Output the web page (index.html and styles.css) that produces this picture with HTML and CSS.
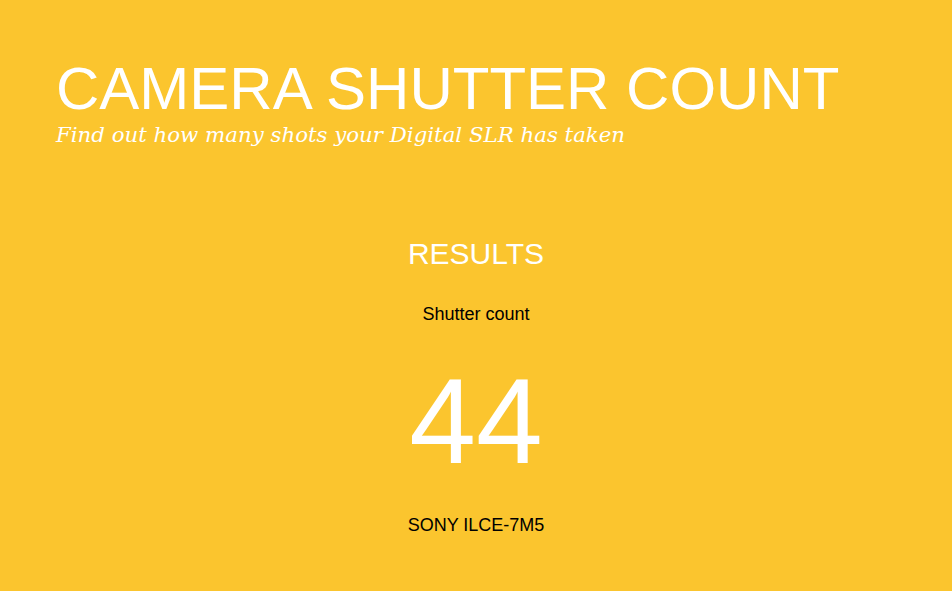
FILE: index.html
```html
<!DOCTYPE html>
<html lang="en">
<head>
  <meta charset="UTF-8">
  <meta name="viewport" content="width=device-width, initial-scale=1.0">
  <title>Camera Shutter Count</title>
  <link rel="stylesheet" href="styles.css">
</head>
<body>
  <header class="masthead">
    <h1>CAMERA SHUTTER COUNT</h1>
    <div class="tagline">Find out how many shots your Digital SLR has taken</div>
  </header>

  <section class="results">
    <h2>RESULTS</h2>
    <div class="label">Shutter count</div>
    <div class="count">44</div>
    <div class="model">SONY ILCE-7M5</div>
  </section>
</body>
</html>
```

FILE: styles.css
```css
body {
  margin: 0;
  padding: 0;
  font-family: 'Liberation Sans', Arial, sans-serif;
  background: #fbc52e;
  color: #000;
}

.masthead {
  padding: 56px 56px 0;
  color: #fff;
}

h1 {
  margin: 0;
  font-size: 60px;
  font-weight: normal;
  line-height: 1.1;
}

.tagline {
  font-family: 'DejaVu Serif', Georgia, serif;
  font-style: italic;
  font-size: 21.3px;
  line-height: 1.2;
}

.results {
  text-align: center;
  padding-top: 89px;
}

h2 {
  margin: 0;
  color: #fff;
  font-size: 30px;
  font-weight: normal;
}

.label {
  margin-top: 33px;
  font-size: 18px;
}

.count {
  margin-top: 36px;
  color: #fff;
  font-size: 120px;
  line-height: 1;
}

.model {
  margin-top: 34px;
  font-size: 18px;
}
```
